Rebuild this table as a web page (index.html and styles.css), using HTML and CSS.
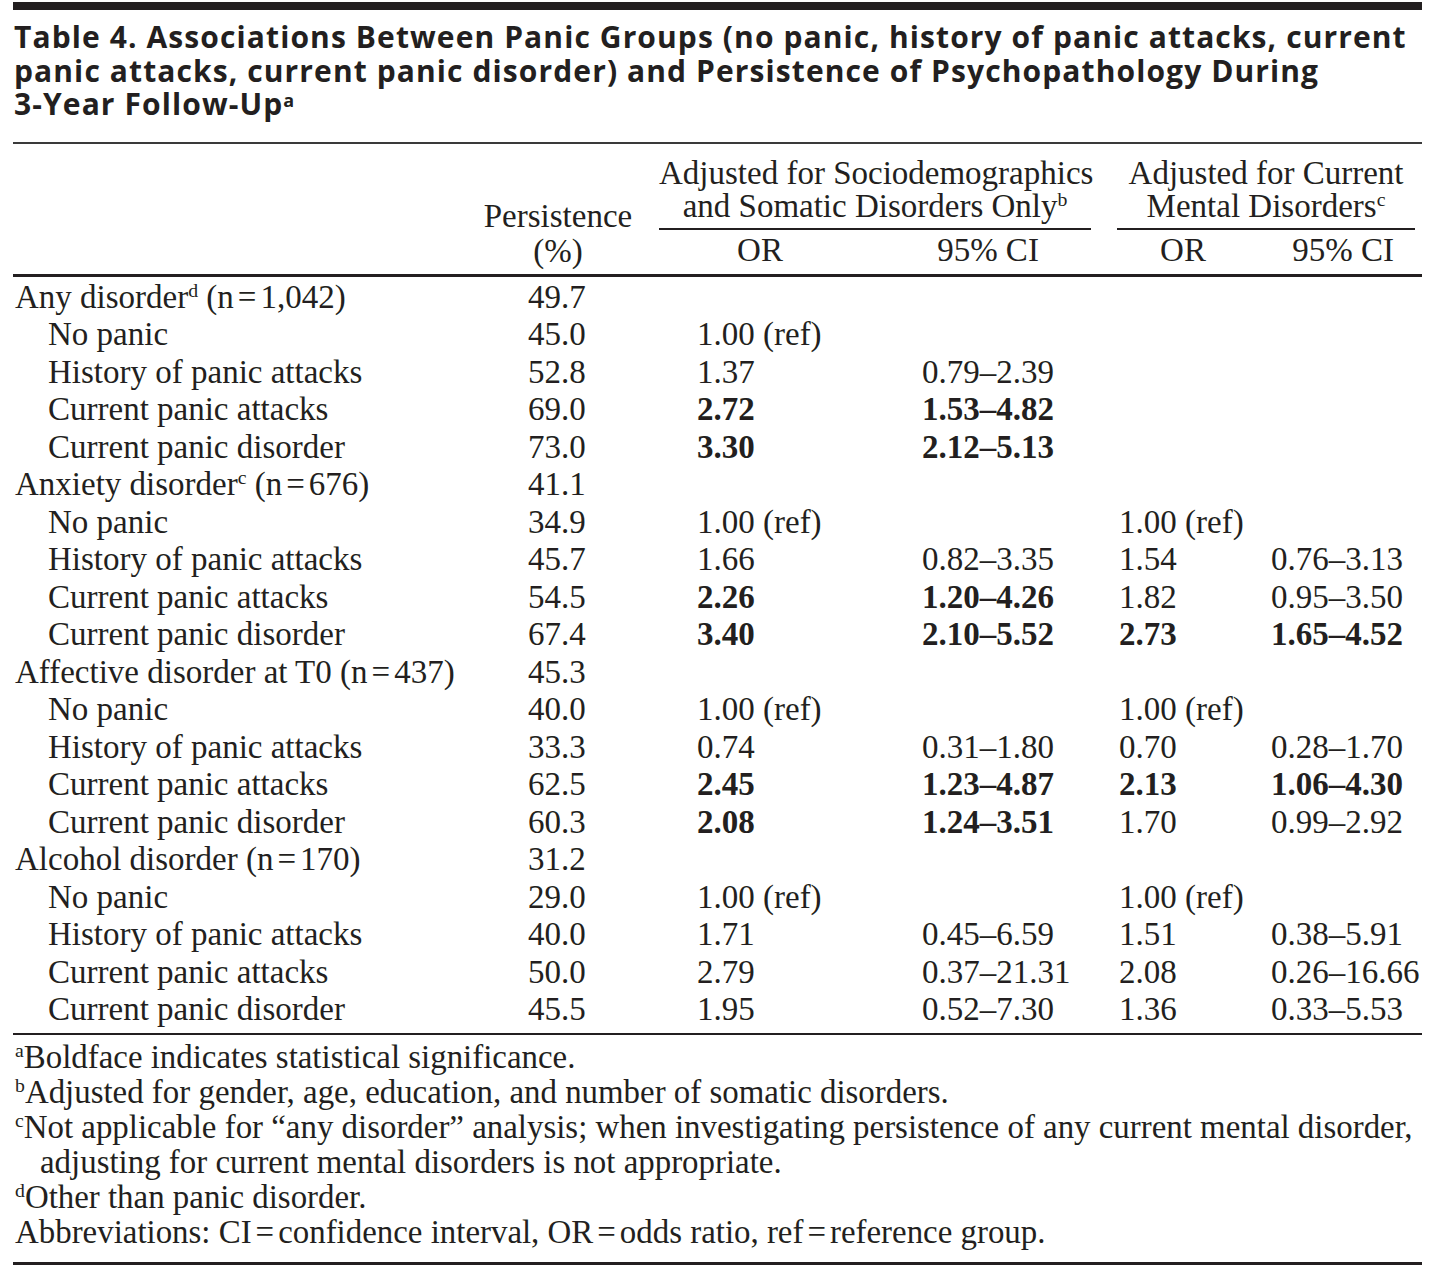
FILE: index.html
```html
<!DOCTYPE html>
<html lang="en">
<head>
<meta charset="utf-8">
<title>Table 4</title>
<link rel="stylesheet" href="styles.css">
</head>
<body>
<div class="page">
  <div class="topbar"></div>
  <h1 class="title">Table 4. Associations Between Panic Groups (no panic, history of panic attacks, current<br>panic attacks, current panic disorder) and Persistence of Psychopathology During<br>3-Year Follow-Up<sup class="tsup">a</sup></h1>
  <table class="data">
    <colgroup>
      <col class="w-label"><col class="w-pers"><col class="w-or1"><col class="w-ci1"><col class="w-or2"><col class="w-ci2">
    </colgroup>
    <thead>
      <tr class="hrow1">
        <th rowspan="2" class="h-label"></th>
        <th rowspan="2" class="h-pers">Persistence<br>(%)</th>
        <th colspan="2" class="h-span"><div class="span-in span1">Adjusted for Sociodemographics<br>and Somatic Disorders Only<sup class="sup">b</sup></div></th>
        <th colspan="2" class="h-span"><div class="span-in span2">Adjusted for Current<br>Mental Disorders<sup class="sup">c</sup></div></th>
      </tr>
      <tr class="hrow2">
        <th class="h-or1">OR</th>
        <th class="h-ci1">95% CI</th>
        <th class="h-or2">OR</th>
        <th class="h-ci2">95% CI</th>
      </tr>
    </thead>
    <tbody>
      <tr class="first"><td class="lab">Any disorder<sup class="sup">d</sup> (n<span class="eq">=</span>1,042)</td><td class="pers">49.7</td><td class="or1"></td><td class="ci1"></td><td class="or2"></td><td class="ci2"></td></tr>
      <tr><td class="lab sub">No panic</td><td class="pers">45.0</td><td class="or1">1.00 (ref)</td><td class="ci1"></td><td class="or2"></td><td class="ci2"></td></tr>
      <tr><td class="lab sub">History of panic attacks</td><td class="pers">52.8</td><td class="or1">1.37</td><td class="ci1">0.79–2.39</td><td class="or2"></td><td class="ci2"></td></tr>
      <tr><td class="lab sub">Current panic attacks</td><td class="pers">69.0</td><td class="or1 b">2.72</td><td class="ci1 b">1.53–4.82</td><td class="or2"></td><td class="ci2"></td></tr>
      <tr><td class="lab sub">Current panic disorder</td><td class="pers">73.0</td><td class="or1 b">3.30</td><td class="ci1 b">2.12–5.13</td><td class="or2"></td><td class="ci2"></td></tr>

      <tr><td class="lab">Anxiety disorder<sup class="sup">c</sup> (n<span class="eq">=</span>676)</td><td class="pers">41.1</td><td class="or1"></td><td class="ci1"></td><td class="or2"></td><td class="ci2"></td></tr>
      <tr><td class="lab sub">No panic</td><td class="pers">34.9</td><td class="or1">1.00 (ref)</td><td class="ci1"></td><td class="or2">1.00 (ref)</td><td class="ci2"></td></tr>
      <tr><td class="lab sub">History of panic attacks</td><td class="pers">45.7</td><td class="or1">1.66</td><td class="ci1">0.82–3.35</td><td class="or2">1.54</td><td class="ci2">0.76–3.13</td></tr>
      <tr><td class="lab sub">Current panic attacks</td><td class="pers">54.5</td><td class="or1 b">2.26</td><td class="ci1 b">1.20–4.26</td><td class="or2">1.82</td><td class="ci2">0.95–3.50</td></tr>
      <tr><td class="lab sub">Current panic disorder</td><td class="pers">67.4</td><td class="or1 b">3.40</td><td class="ci1 b">2.10–5.52</td><td class="or2 b">2.73</td><td class="ci2 b">1.65–4.52</td></tr>

      <tr><td class="lab">Affective disorder at T0 (n<span class="eq">=</span>437)</td><td class="pers">45.3</td><td class="or1"></td><td class="ci1"></td><td class="or2"></td><td class="ci2"></td></tr>
      <tr><td class="lab sub">No panic</td><td class="pers">40.0</td><td class="or1">1.00 (ref)</td><td class="ci1"></td><td class="or2">1.00 (ref)</td><td class="ci2"></td></tr>
      <tr><td class="lab sub">History of panic attacks</td><td class="pers">33.3</td><td class="or1">0.74</td><td class="ci1">0.31–1.80</td><td class="or2">0.70</td><td class="ci2">0.28–1.70</td></tr>
      <tr><td class="lab sub">Current panic attacks</td><td class="pers">62.5</td><td class="or1 b">2.45</td><td class="ci1 b">1.23–4.87</td><td class="or2 b">2.13</td><td class="ci2 b">1.06–4.30</td></tr>
      <tr><td class="lab sub">Current panic disorder</td><td class="pers">60.3</td><td class="or1 b">2.08</td><td class="ci1 b">1.24–3.51</td><td class="or2">1.70</td><td class="ci2">0.99–2.92</td></tr>

      <tr><td class="lab">Alcohol disorder (n<span class="eq">=</span>170)</td><td class="pers">31.2</td><td class="or1"></td><td class="ci1"></td><td class="or2"></td><td class="ci2"></td></tr>
      <tr><td class="lab sub">No panic</td><td class="pers">29.0</td><td class="or1">1.00 (ref)</td><td class="ci1"></td><td class="or2">1.00 (ref)</td><td class="ci2"></td></tr>
      <tr><td class="lab sub">History of panic attacks</td><td class="pers">40.0</td><td class="or1">1.71</td><td class="ci1">0.45–6.59</td><td class="or2">1.51</td><td class="ci2">0.38–5.91</td></tr>
      <tr><td class="lab sub">Current panic attacks</td><td class="pers">50.0</td><td class="or1">2.79</td><td class="ci1">0.37–21.31</td><td class="or2">2.08</td><td class="ci2">0.26–16.66</td></tr>
      <tr class="last"><td class="lab sub">Current panic disorder</td><td class="pers">45.5</td><td class="or1">1.95</td><td class="ci1">0.52–7.30</td><td class="or2">1.36</td><td class="ci2">0.33–5.53</td></tr>
    </tbody>
  </table>
  <div class="notes">
    <p class="note"><sup class="nsup">a</sup>Boldface indicates statistical significance.</p>
    <p class="note"><sup class="nsup">b</sup>Adjusted for gender, age, education, and number of somatic disorders.</p>
    <p class="note"><sup class="nsup">c</sup>Not applicable for “any disorder” analysis; when investigating persistence of any current mental disorder,<span class="cont">adjusting for current mental disorders is not appropriate.</span></p>
    <p class="note"><sup class="nsup">d</sup>Other than panic disorder.</p>
    <p class="note">Abbreviations: CI<span class="eq">=</span>confidence interval, OR<span class="eq">=</span>odds ratio, ref<span class="eq">=</span>reference group.</p>
  </div>
</div>
</body>
</html>
```

FILE: styles.css
```css
html, body {
  margin: 0;
  padding: 0;
  background: #ffffff;
}

.page {
  width: 1409px;
  padding: 0 10px 0 13px;
  color: #231f20;
  font-family: "Liberation Serif", "Times New Roman", serif;
  font-size: 33px;
}

.topbar {
  height: 8px;
  margin-top: 2px;
  background: #231f20;
}

.title {
  margin: 0;
  padding: 10px 0 21px 1px;
  font-family: "Open Sans", "Liberation Sans", sans-serif;
  font-weight: 700;
  font-size: 30px;
  letter-spacing: 1.1px;
  line-height: 33.5px;
  color: #231f20;
  border-bottom: 2px solid #3a3a3a;
}

.tsup {
  font-size: 0.6em;
  line-height: 0;
  vertical-align: 0.45em;
}

.data {
  width: 1409px;
  table-layout: fixed;
  border-collapse: separate;
  border-spacing: 0;
}

.w-label { width: 467px; }
.w-pers { width: 156px; }
.w-or1 { width: 264px; }
.w-ci1 { width: 204px; }
.w-or2 { width: 146px; }
.w-ci2 { width: 172px; }

th {
  font-weight: 400;
  padding: 0;
  white-space: nowrap;
}

.hrow1 th {
  vertical-align: top;
}

.h-label, .h-pers {
  border-bottom: 3px solid #231f20;
}

.h-pers {
  vertical-align: bottom !important;
  text-align: center;
  line-height: 35px;
  padding-bottom: 4.5px;
}

.h-span {
  padding-top: 13px;
  line-height: 33px;
}

.span-in {
  text-align: center;
  padding-bottom: 5px;
  border-bottom: 2px solid #231f20;
}

.span1 { margin: 0 13px 0 23px; }
.span2 { margin: 0 7px 0 13px; }

.hrow2 th {
  line-height: 37.5px;
  padding-top: 2px;
  padding-bottom: 4.5px;
  border-bottom: 3px solid #231f20;
  text-align: center;
}

.hrow2 .h-or1 { padding-right: 16px; }
.hrow2 .h-ci1 { padding-right: 28px; }
.hrow2 .h-or2 { padding-left: 12px; }
.hrow2 .h-ci2 { padding-left: 14px; }

td {
  padding: 0;
  line-height: 37.5px;
  white-space: nowrap;
  vertical-align: top;
}

.first td { padding-top: 2px; }

.last td {
  padding-bottom: 4px;
  border-bottom: 2.5px solid #231f20;
}

.lab { padding-left: 2px; }
.lab.sub { padding-left: 35px; }
.pers { padding-left: 48px; }
.or1 { padding-left: 61px; }
.ci1 { padding-left: 22px; }
.or2 { padding-left: 15px; }
.ci2 { padding-left: 21px; }

.b { font-weight: 700; }

.eq {
  padding: 0 4px;
}

.sup {
  font-size: 0.6em;
  line-height: 0;
  vertical-align: 0.55em;
}

.notes {
  padding: 5px 0 12px 0;
  border-bottom: 3px solid #231f20;
  font-size: 32.9px;
}

.note {
  margin: 0;
  padding-left: 2px;
  line-height: 35px;
  white-space: nowrap;
}

.nsup {
  font-size: 0.6em;
  line-height: 0;
  vertical-align: 0.55em;
}

.cont {
  display: block;
  padding-left: 25px;
}
```
